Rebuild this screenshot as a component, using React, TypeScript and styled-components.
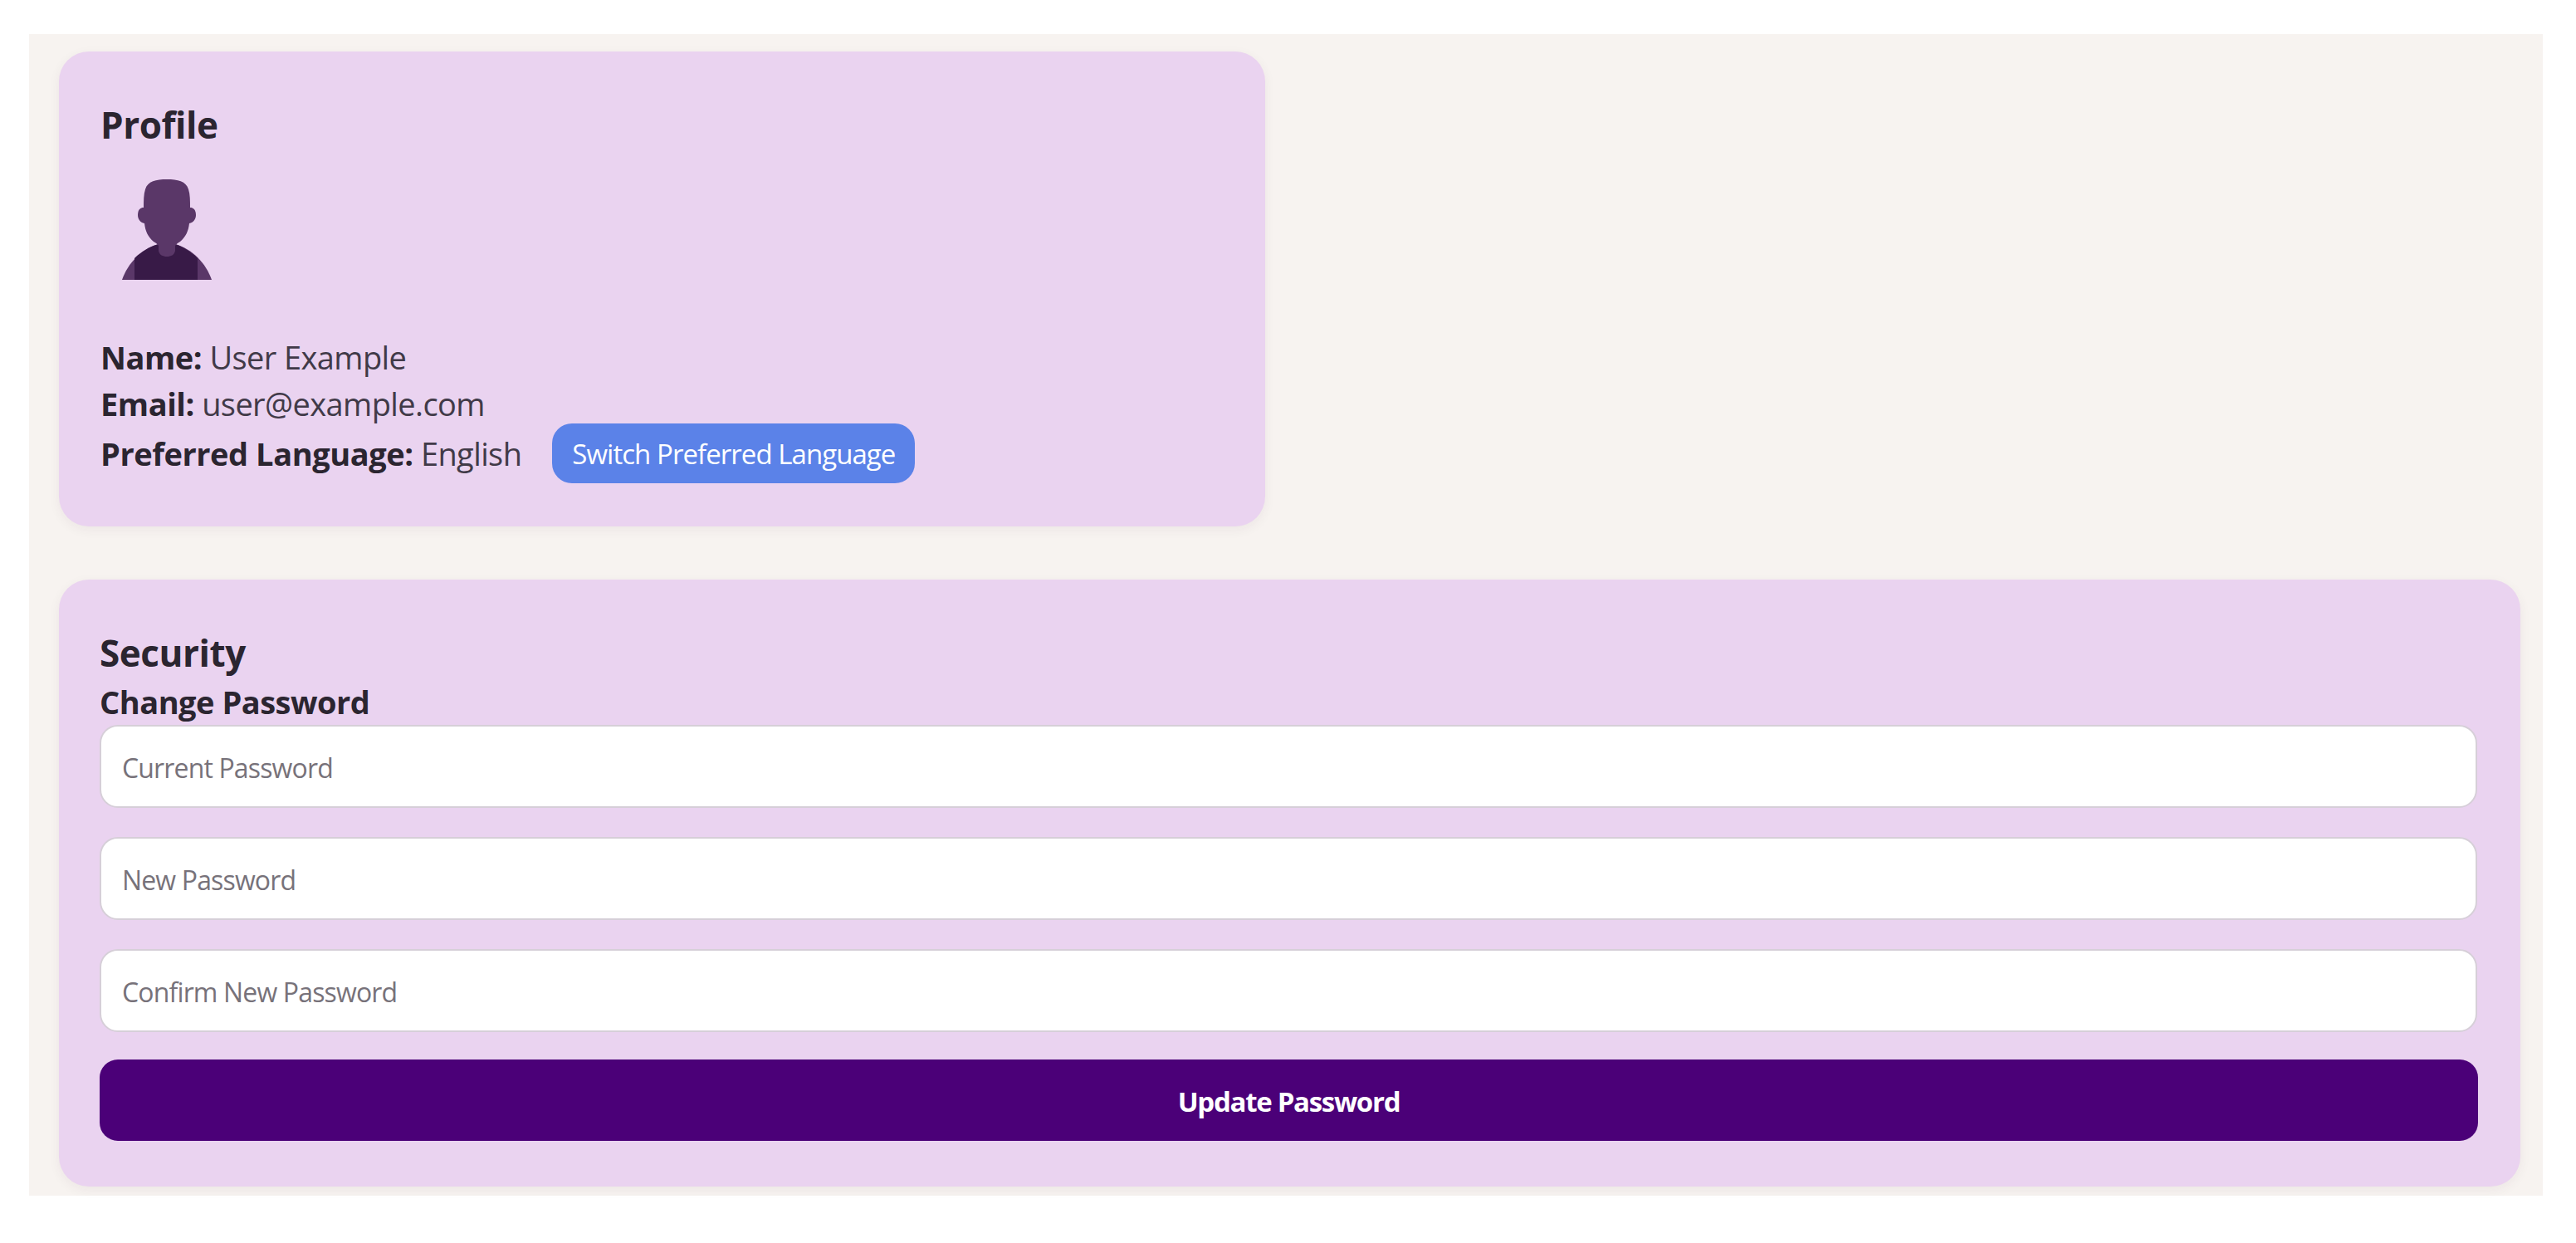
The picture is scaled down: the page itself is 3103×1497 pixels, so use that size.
import React from "react";
import styled, { createGlobalStyle } from "styled-components";

const Global = createGlobalStyle`
  html, body { margin: 0; padding: 0; background: #fff; }
  * { box-sizing: border-box; }
  body { font-family: "Open Sans", "Noto Sans", sans-serif; color: #2b2530; }
`;
const Panel = styled.main`
  margin: 41px 40px 57px 35px;
  height: 1399px;
  padding: 21px 27px 11px 36px;
  background: #f7f3f0;
  display: flex;
  flex-direction: column;
  gap: 64px;
`;
const Card = styled.section<{ $narrow?: boolean }>`
  width: ${(p) => (p.$narrow ? "1453px" : "100%")};
  background: #ead3f0;
  border-radius: 36px;
  box-shadow: 0 4px 14px rgba(60, 40, 60, 0.06);
  display: flex;
  flex-direction: column;
`;
const ProfileCard = styled(Card)`
  height: 572px;
  padding: 60px 50px 0 50px;
`;
const SecurityCard = styled(Card)`
  height: 731px;
  padding: 60px 50px 0 49px;
`;
const Title = styled.h2`
  margin: 0;
  font-size: 44px;
  line-height: 56px;
  font-weight: 700;
  letter-spacing: -0.45px;
  color: #2b2530;
`;
const Subtitle = styled.h3`
  margin: 0;
  height: 59px;
  font-size: 38px;
  line-height: 62px;
  font-weight: 700;
  letter-spacing: -0.5px;
  color: #2b2530;
`;
const Avatar = styled.svg`
  display: block;
  width: 170px;
  height: 150px;
  margin: 22px 0 0 -11px;
`;
const InfoLine = styled.div`
  font-size: 38px;
  line-height: 56px;
  letter-spacing: -0.6px;
  color: #413a48;
  display: flex;
  align-items: center;
  white-space: pre;
`;
const InfoList = styled.div`
  margin-top: 52px;
  display: flex;
  flex-direction: column;
`;
const LangLine = styled(InfoLine)`
  margin-top: -4px;
  height: 72px;
`;
const Strong = styled.strong`
  font-weight: 700;
  letter-spacing: -0.45px;
  color: #2b2530;
`;
const SwitchButton = styled.button`
  margin-left: 37px;
  width: 437px;
  height: 72px;
  border: 0;
  border-radius: 24px;
  background: #5b82e8;
  color: #fff;
  font-family: inherit;
  font-size: 33px;
  letter-spacing: -0.95px;
  padding: 0;
`;
const Form = styled.form`
  display: flex;
  flex-direction: column;
  gap: 35px;
  width: 2865px;
`;
const Input = styled.input`
  display: block;
  width: 2864px;
  height: 100px;
  border: 2px solid #d6cfd8;
  border-radius: 22px;
  background: #fff;
  padding: 2px 25px 0;
  font-family: inherit;
  font-size: 32px;
  letter-spacing: -0.85px;
  &::placeholder { color: #77727a; opacity: 1; }
`;
const Submit = styled.button`
  height: 98px;
  margin-top: -2px;
  border: 0;
  border-radius: 22px;
  background: #4b0078;
  color: #fff;
  font-family: inherit;
  font-size: 33px;
  font-weight: 700;
  letter-spacing: -1.3px;
  padding: 2px 0 0;
`;

export default function App() {
  return (
    <>
      <Global />
      <Panel>
        <ProfileCard $narrow>
          <Title>Profile</Title>
          <Avatar viewBox="0 0 170 150">
            <path d="M37 137 C44 117 60 100 81 94 L101 94 C122 100 138 117 145 137 Z" fill="#5a3768" />
            <path d="M52 137 L52 111 C60 103 70 97 81 94 L101 94 C110 97 120 103 128 111 L128 137 Z" fill="#381a47" />
            <path d="M91 16 C78 16 68 18 65 28 C63 34 63 42 63 50 C58 50 56 54 56 59 C56 64 59 68 64 69 C65 78 68 85 75 91 C78 93 80 94 81 96 L81 102 C82 107 86 109 91 109 C96 109 100 107 101 102 L101 96 C102 94 104 93 107 91 C114 85 117 78 118 69 C123 68 126 64 126 59 C126 54 124 50 119 50 C119 42 119 34 117 28 C114 18 104 16 91 16 Z" fill="#5a3768" />
          </Avatar>
          <InfoList>
            <InfoLine><Strong>Name:</Strong> User Example</InfoLine>
            <InfoLine><Strong>Email:</Strong> user@example.com</InfoLine>
            <LangLine>
              <Strong>Preferred Language:</Strong> English
              <SwitchButton type="button">Switch Preferred Language</SwitchButton>
            </LangLine>
          </InfoList>
        </ProfileCard>
        <SecurityCard>
          <Title>Security</Title>
          <Subtitle>Change Password</Subtitle>
          <Form>
            <Input type="password" placeholder="Current Password" />
            <Input type="password" placeholder="New Password" />
            <Input type="password" placeholder="Confirm New Password" />
            <Submit type="button">Update Password</Submit>
          </Form>
        </SecurityCard>
      </Panel>
    </>
  );
}
